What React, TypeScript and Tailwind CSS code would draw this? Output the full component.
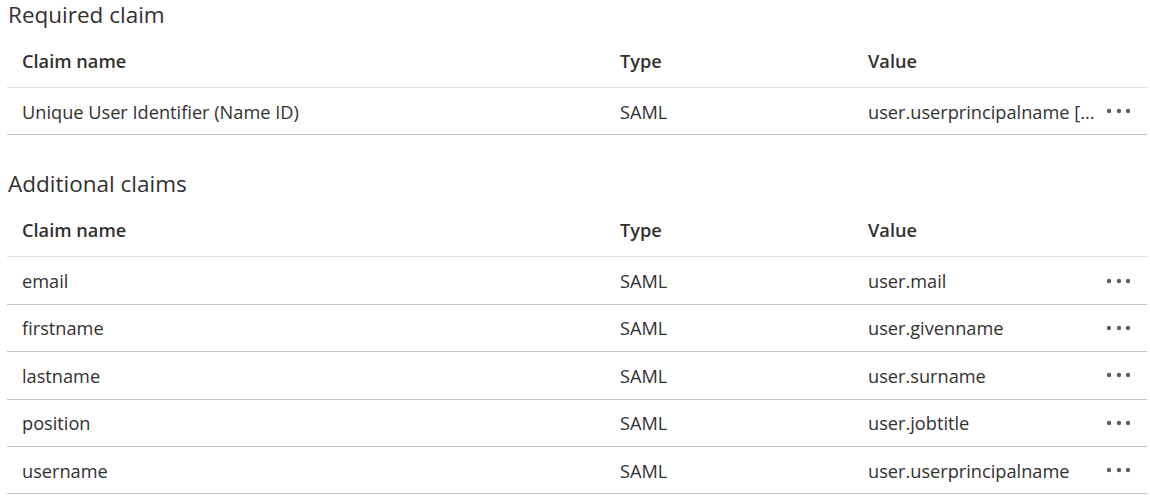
import React from 'react';

type Claim = { name: string; type: string; value: string };

const required: Claim[] = [
  { name: 'Unique User Identifier (Name ID)', type: 'SAML', value: 'user.userprincipalname [...' },
];

const additional: Claim[] = [
  { name: 'email', type: 'SAML', value: 'user.mail' },
  { name: 'firstname', type: 'SAML', value: 'user.givenname' },
  { name: 'lastname', type: 'SAML', value: 'user.surname' },
  { name: 'position', type: 'SAML', value: 'user.jobtitle' },
  { name: 'username', type: 'SAML', value: 'user.userprincipalname' },
];

const cols = 'grid grid-cols-[598px_248px_1fr_49px] pl-[15px] items-center';

function MoreIcon() {
  return (
    <svg width="26" height="6" viewBox="0 0 26 6" className="text-[#605e5c]">
      <circle cx="3" cy="3" r="2.2" fill="currentColor" />
      <circle cx="13" cy="3" r="2.2" fill="currentColor" />
      <circle cx="22" cy="3" r="2.2" fill="currentColor" />
    </svg>
  );
}

function ClaimsTable({ title, rows, className }: { title: string; rows: Claim[]; className?: string }) {
  return (
    <section className={className}>
      <h2 className="h-[31px] pl-[8px] text-[22.5px] leading-[30px] text-[#323130]">{title}</h2>
      <div className="mt-[5px] ml-[7px] w-[1140px]">
        {/* Header */}
        <div className={`${cols} h-[52px] border-b border-[#e1dfdd] font-semibold`}>
          <div>Claim name</div>
          <div>Type</div>
          <div>Value</div>
          <div />
        </div>
        {rows.map((r) => (
          <div key={r.name} className={`${cols} h-[47.4px] border-b border-[#c8c6c4]`}>
            <div className="truncate pt-[2px]">{r.name}</div>
            <div className="pt-[2px]">{r.type}</div>
            <div className="whitespace-nowrap pt-[2px]">{r.value}</div>
            <div className="flex justify-end pr-[15px]">
              <MoreIcon />
            </div>
          </div>
        ))}
      </div>
    </section>
  );
}

export default function App() {
  return (
    <div
      className="h-[500px] w-[1150px] overflow-hidden bg-white text-[18.2px] text-[#323130]"
      style={{ fontFamily: '"Open Sans", "Noto Sans", sans-serif' }}
    >
      <ClaimsTable title="Required claim" rows={required} />
      <ClaimsTable title="Additional claims" rows={additional} className="mt-[34px]" />
    </div>
  );
}
